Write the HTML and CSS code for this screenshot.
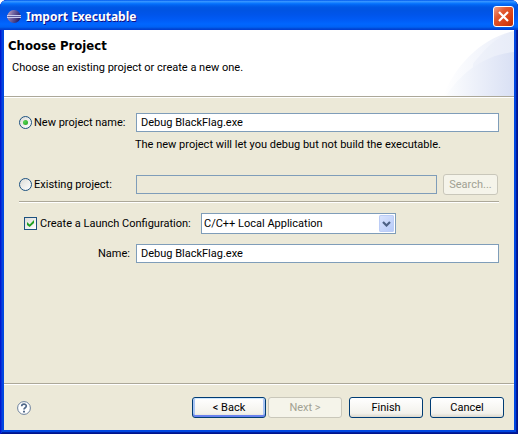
FILE: index.html
```html
<!DOCTYPE html>
<html lang="en">
<head>
<meta charset="utf-8">
<title>Import Executable</title>
<link rel="stylesheet" href="styles.css">
</head>
<body>
<main class="window">
  <header class="titlebar">
    <svg class="app-icon" viewBox="0 0 16 16" aria-hidden="true">
      <defs>
        <linearGradient id="orb" x1="0" y1="0" x2="1" y2="0.4">
          <stop offset="0" stop-color="#d8b0bc"/>
          <stop offset="0.45" stop-color="#7668a4"/>
          <stop offset="1" stop-color="#29226c"/>
        </linearGradient>
      </defs>
      <ellipse cx="7" cy="7.5" rx="6.7" ry="6.5" fill="url(#orb)"/>
      <path d="M0 6.5h14M0 8.5h14" stroke="#c9cdee"/>
      <path d="M1 7.5h13" stroke="#5c569c"/>
    </svg>
    <h1 class="window-title">Import Executable</h1>
    <button class="close" type="button" aria-label="Close">
      <svg viewBox="0 0 11 11" aria-hidden="true"><path d="M1 1l9 9M10 1l-9 9" stroke="#fff" stroke-width="2.2"/></svg>
    </button>
  </header>
  <section class="banner">
    <div class="banner-text">
      <h2 class="heading">Choose Project</h2>
      <p class="subtitle">Choose an existing project or create a new one.</p>
    </div>
    <svg class="banner-art" viewBox="0 0 75 66" aria-hidden="true">
      <defs>
        <linearGradient id="haze" x1="0" y1="0" x2="1" y2="0">
          <stop offset="0" stop-color="#fff"/>
          <stop offset="1" stop-color="#e9edf9"/>
        </linearGradient>
        <linearGradient id="swoosh" x1="0" y1="0" x2="1" y2="0">
          <stop offset="0" stop-color="#fcfdfe"/>
          <stop offset="1" stop-color="#d9e0f4"/>
        </linearGradient>
      </defs>
      <path d="M4 66C16 36 42 8 75 1v65z" fill="url(#haze)"/>
      <path d="M34 34C46 19 58 6 75 1v21C60 25 46 30 34 39z" fill="#e6ebf8" opacity=".4"/>
      <path d="M7 66C20 45 44 25 75 22v44z" fill="url(#swoosh)"/>
    </svg>
  </section>
  <form class="wizard">
    <div class="fields">
      <div class="row">
        <div class="label-cell">
          <input class="radio" type="radio" name="target" id="new" checked>
          <label for="new">New project name:</label>
        </div>
        <input class="text" type="text" aria-label="New project name" value="Debug BlackFlag.exe">
      </div>
      <p class="hint">The new project will let you debug but not build the executable.</p>
      <div class="row">
        <div class="label-cell">
          <input class="radio" type="radio" name="target" id="existing">
          <label for="existing">Existing project:</label>
        </div>
        <input class="text" type="text" aria-label="Existing project" disabled>
        <button class="button search" type="button" disabled>Search...</button>
      </div>
      <hr class="rule">
      <div class="row launch">
        <input class="check" type="checkbox" id="launch" checked>
        <label for="launch">Create a Launch Configuration:</label>
        <div class="combo">
          <select class="select" aria-label="Launch configuration type">
            <option>C/C++ Local Application</option>
          </select>
          <span class="arrow"><svg viewBox="0 0 9 6" aria-hidden="true"><path d="M1 1l3.5 3.5L8 1" fill="none" stroke="#4d6185" stroke-width="2.2"/></svg></span>
        </div>
      </div>
      <div class="row">
        <label class="label-cell name-label" for="name">Name:</label>
        <input class="text" type="text" id="name" value="Debug BlackFlag.exe">
      </div>
    </div>
    <footer class="footer">
      <button class="help" type="button" aria-label="Help">
        <svg viewBox="0 0 14 14" aria-hidden="true">
          <circle cx="7" cy="7" r="6.4" fill="#fff" stroke="#6c809c"/>
          <path d="M4.7 5.3C4.7 2.5 9.3 2.5 9.3 5.1C9.3 6.8 7 6.7 7 8.6" fill="none" stroke="#506888" stroke-width="1.7"/>
          <path d="M6 9.7h2v1.7H6z" fill="#506888"/>
        </svg>
      </button>
      <button class="button default" type="button">&lt; Back</button>
      <button class="button next" type="button" disabled>Next &gt;</button>
      <button class="button finish" type="submit">Finish</button>
      <button class="button cancel" type="button">Cancel</button>
    </footer>
  </form>
</main>
</body>
</html>
```
FILE: styles.css
```css
* { box-sizing: border-box; }

body {
  margin: 0;
  background: #fff;
  color: #000;
  font: 11px/14px Tahoma, Roboto, sans-serif;
}

h1, h2, p { margin: 0; }
button, input, select { font: inherit; color: inherit; margin: 0; padding: 0; }
svg { display: block; }

.window {
  display: flex;
  flex-direction: column;
  min-height: 100vh;
  padding: 0 4px 4px;
  border-radius: 7px 7px 0 0;
  background: #0046e0;
  box-shadow: inset 1px 0 #0019cf, inset -1px -1px #00138c, inset 2px 0 #0831d9, inset -2px -2px #001ea0;
}

.titlebar {
  display: flex;
  align-items: center;
  height: 30px;
  margin: 0 -4px;
  padding: 3px 4px 0 7px;
  border-radius: 7px 7px 0 0;
  background: linear-gradient(#0058ee 0, #3593ff 5%, #288eff 7%, #127dff 10%, #036ffc 13%, #0262ee 18%, #0057e5 24%, #0054e3 35%, #0055eb 50%, #005bf5 65%, #0066ff 80%, #0062f5 90%, #0043cf 97%, #003dd7);
}

.app-icon { width: 16px; height: 16px; }

.window-title {
  flex: 1;
  margin-left: 3px;
  color: #fff;
  font: bold 12px/18px "Noto Sans", sans-serif;
  text-shadow: 1px 1px #0f1089;
}

.close {
  display: grid;
  place-items: center;
  width: 21px;
  height: 21px;
  border: 1px solid #fff;
  border-radius: 3px;
  background: linear-gradient(135deg, #f0a088, #e25830 35%, #d83c10 75%, #b83008);
}

.close svg { width: 11px; height: 11px; }

.banner {
  display: flex;
  justify-content: space-between;
  border-bottom: 1px solid #aca899;
  background: #fff;
}

.banner-text { padding: 7px 0 0 4px; }
.heading { font: bold 13px/18px "DejaVu Sans Condensed", "DejaVu Sans", sans-serif; }
.subtitle { padding: 6px 0 0 4px; }
.banner-art { width: 75px; height: 66px; }

.wizard {
  display: flex;
  flex: 1;
  flex-direction: column;
  border-top: 1px solid #fff;
  background: #ece9d8;
}

.fields { flex: 1; padding: 15px; }
.row { display: flex; align-items: center; }
.label-cell { display: flex; align-items: center; flex: none; width: 117px; gap: 2px; white-space: nowrap; }
.name-label { justify-content: flex-end; padding-right: 6px; }

.text {
  flex: 1;
  min-width: 0;
  height: 19px;
  padding: 0 4px;
  border: 1px solid #7f9db9;
  background: #fff;
}

.text:disabled { background: #ece9d8; }
.hint { margin: 6px 0 22px 116px; }

.radio, .check {
  display: grid;
  place-items: center;
  flex: none;
  appearance: none;
  width: 13px;
  height: 13px;
  border: 1px solid #1c5180;
  background: linear-gradient(135deg, #dcdcd7, #fff);
}

.radio { border-radius: 50%; }
.radio:checked::before {
  content: "";
  width: 5px;
  height: 5px;
  border-radius: 50%;
  background: radial-gradient(circle at 35% 35%, #55d551, #21a121);
}

.check:checked::before {
  content: "";
  width: 7px;
  height: 7px;
  background: #21a121;
  clip-path: polygon(0 30%, 38% 65%, 100% 0, 100% 42%, 38% 100%, 0 70%);
}

.rule {
  height: 2px;
  margin: 6px 0 10px;
  border: 0;
  border-top: 1px solid #aca899;
  background: #fff;
}

.launch { gap: 3px; margin-bottom: 10px; padding-left: 5px; white-space: nowrap; }
.launch label { width: 158px; }
.combo { position: relative; width: 195px; }

.select {
  display: block;
  appearance: none;
  width: 100%;
  height: 21px;
  padding: 0 2px;
  border: 1px solid #7f9db9;
  border-radius: 0;
  background: #fff;
}

.arrow {
  position: absolute;
  top: 2px;
  right: 2px;
  display: grid;
  place-items: center;
  width: 15px;
  height: 17px;
  border-radius: 2px;
  background: linear-gradient(135deg, #dbe5fe, #b5c9f8);
  box-shadow: inset 0 0 0 1px #bccdf6;
  pointer-events: none;
}

.arrow svg { width: 9px; height: 6px; }

.button {
  width: 74px;
  height: 21px;
  border: 1px solid #003c74;
  border-radius: 3px;
  background: linear-gradient(#fff, #f3f2ec 80%, #dcd8cc);
}

.button:disabled { border-color: #c9c7ba; background: #f5f4ea; color: #a1a192; }
.default { box-shadow: inset 0 1px #cee7ff, inset 0 -2px #6982ee, inset 2px 0 #a9c5f4, inset -2px 0 #a9c5f4; }
.search { width: 55px; margin: 0 1px 0 6px; }

.footer {
  display: flex;
  align-items: center;
  padding: 13px 10px 12px 13px;
  border-top: 1px solid #aca899;
  box-shadow: inset 0 1px #fff;
}

.help { height: 15px; margin-right: auto; border: 0; background: none; }
.help svg { width: 14px; height: 14px; }
.next { margin-left: 2px; }
.finish, .cancel { margin-left: 7px; }
```
